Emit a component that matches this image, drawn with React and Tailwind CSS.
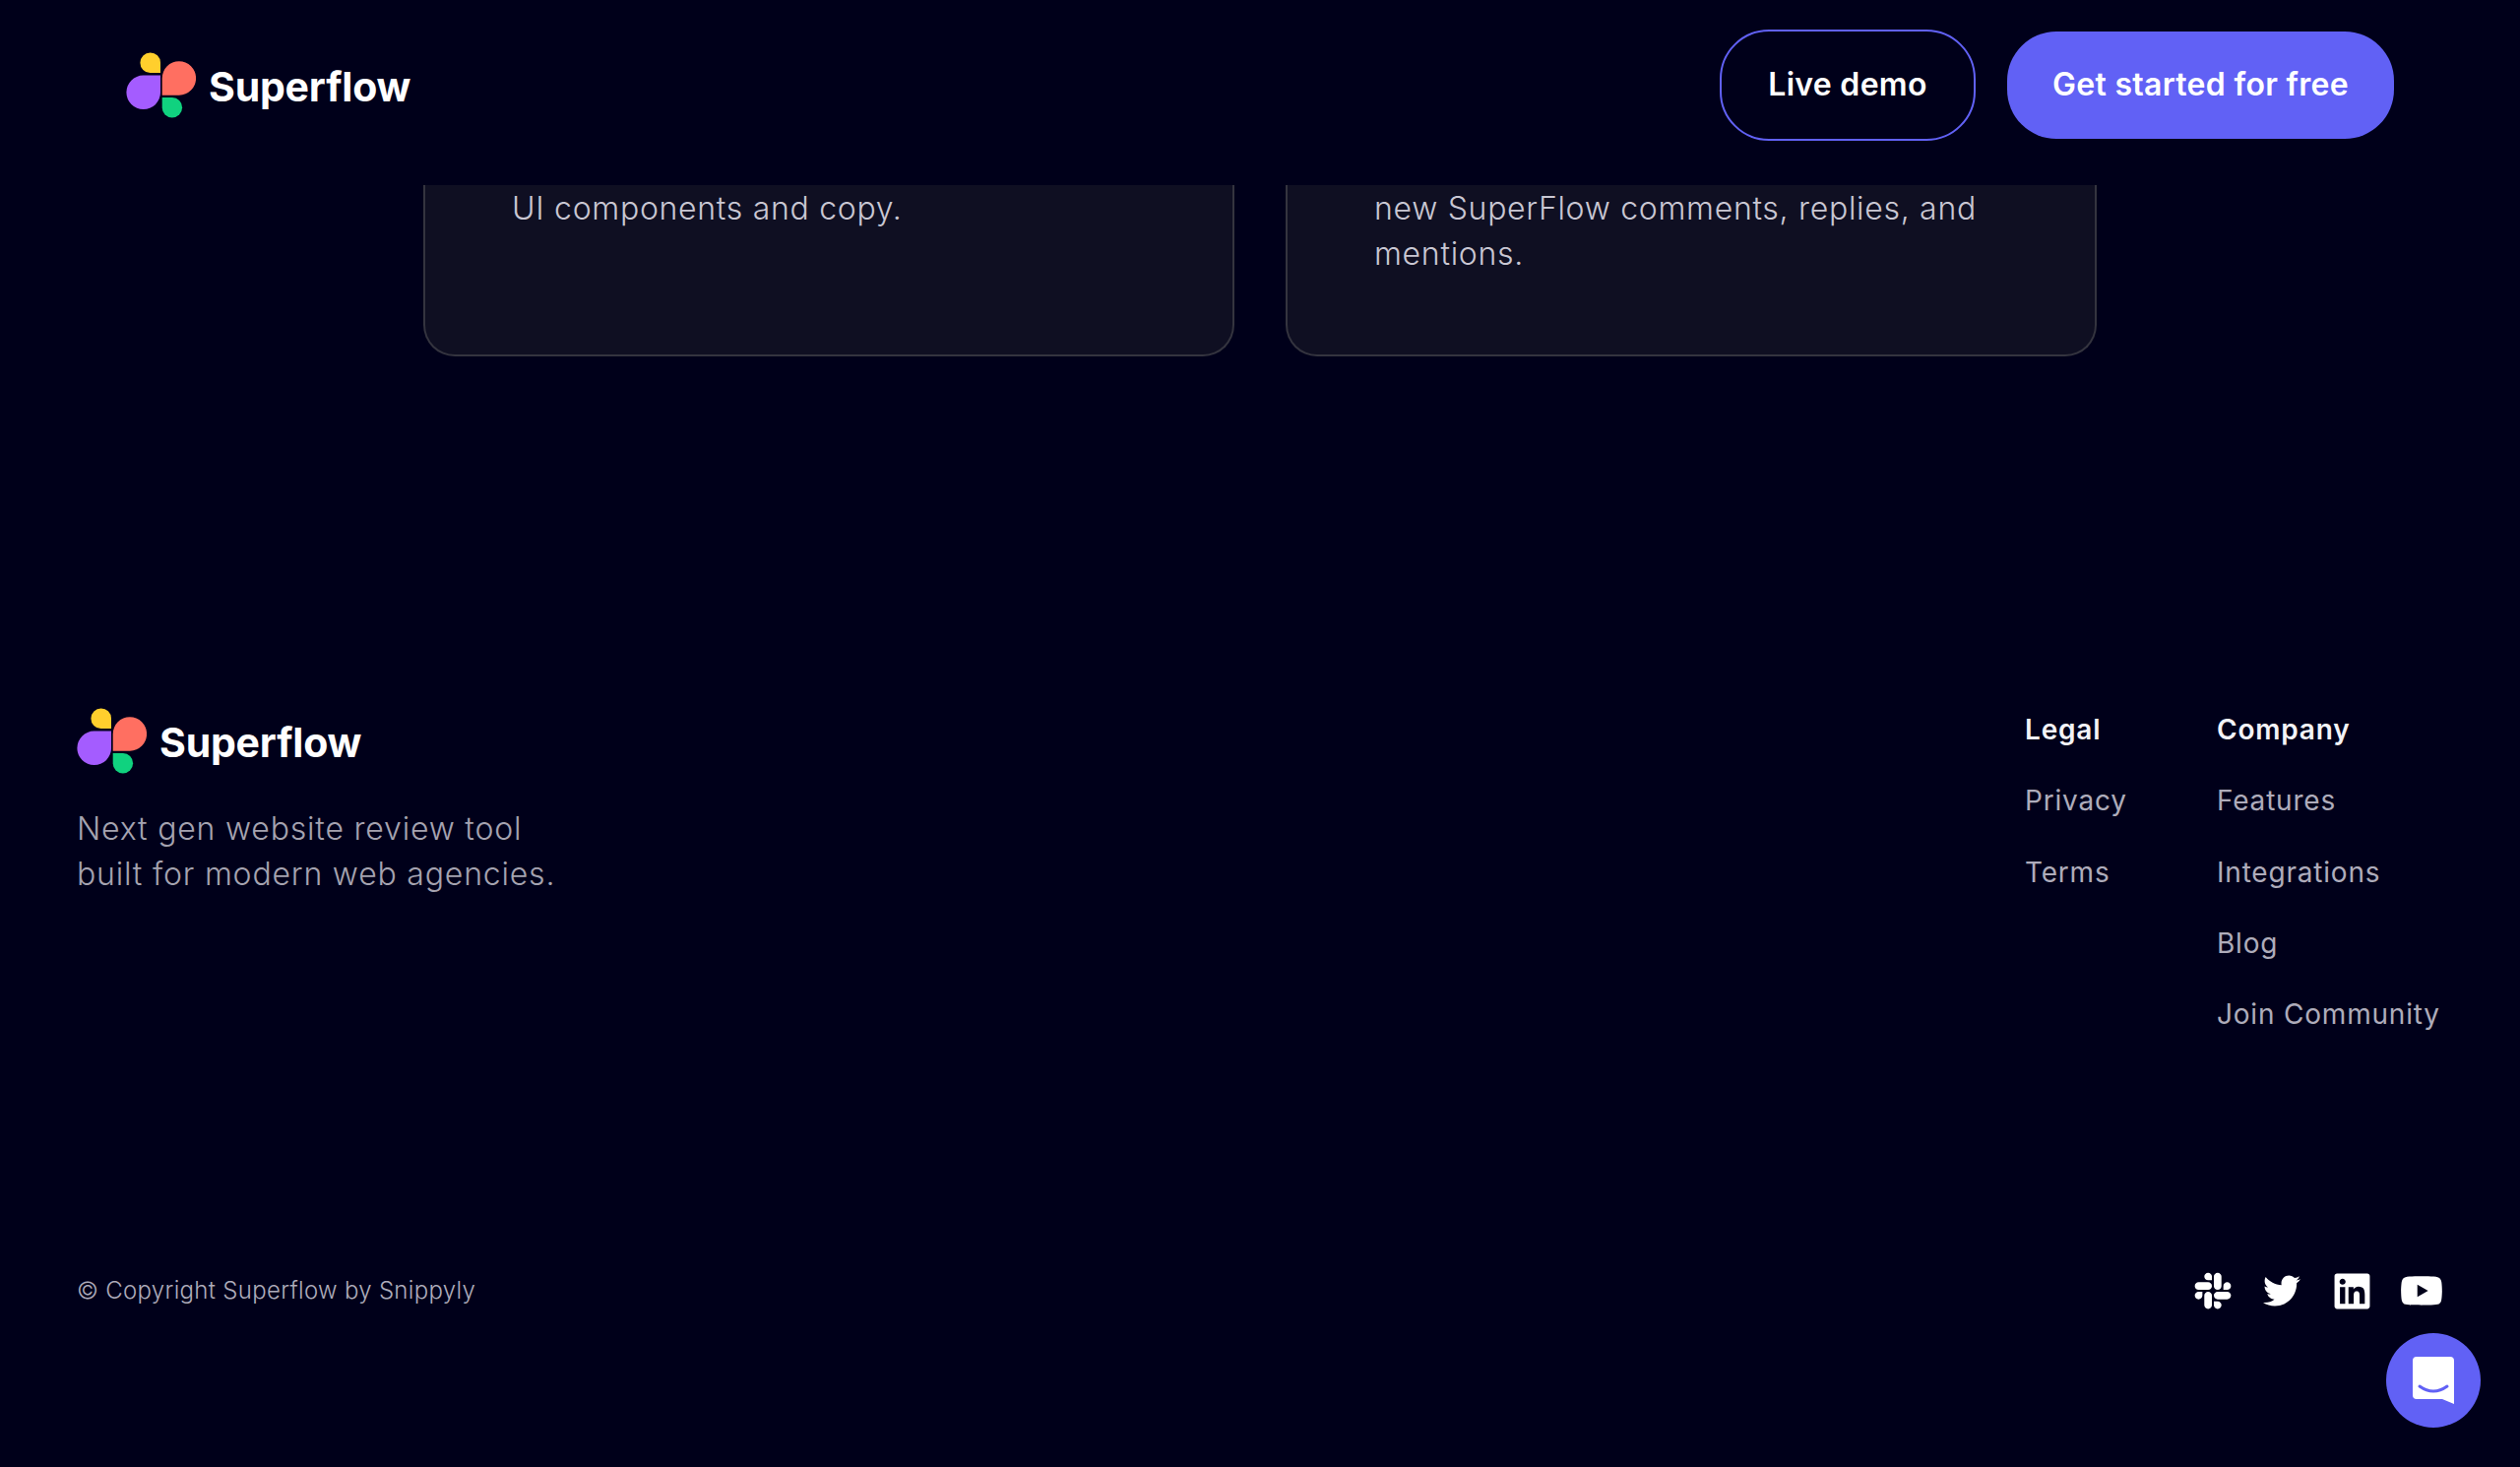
import { FaSlack, FaTwitter, FaLinkedin, FaYoutube } from "react-icons/fa";

const FONT = "font-['Inter','Liberation_Sans',sans-serif]";

function Logo() {
  return (
    <div className="flex items-center gap-[13px]">
      <svg width="71" height="67" viewBox="0 0 71 67" className="shrink-0">
        <path d="M35 21H24.5A10.3 10.3 0 1 1 35 10.5Z" fill="#ffcf2d" />
        <path d="M35 23.5V41A17.3 17.3 0 1 1 17.5 23.5Z" fill="#a45cff" />
        <path d="M36.7 43.7V26.5A17.2 17.2 0 1 1 54 43.7Z" fill="#ff6f61" />
        <path d="M36.7 46H47A10.2 10.2 0 1 1 36.7 56.2Z" fill="#10d27f" />
      </svg>
      <span className="mt-[3px] text-[41px] leading-[48px] font-bold text-white tracking-[-0.2px]">Superflow</span>
    </div>
  );
}

function LinkColumn({ title, links, className }) {
  return (
    <div className={className}>
      <p className="h-[72.25px] text-[28px] leading-[40px] font-semibold tracking-[0.8px] text-[#f3f3f7]">{title}</p>
      {links.map(link => (
        <p key={link} className="h-[72.25px] text-[28px] leading-[40px] tracking-[0.8px] text-[#aeacba]">{link}</p>
      ))}
    </div>
  );
}

export default function App() {
  return (
    <div className={`relative h-[1490px] overflow-hidden bg-[#00001a] ${FONT}`}>
      {/* Header */}
      <header className="flex h-[188px] items-center justify-between px-[128px] pb-[16px]">
        <Logo />
        <div className="flex items-center gap-[32px]">
          <button className="h-[113px] w-[260px] rounded-[50px] border-2 border-[#6161f5] text-[32px] font-semibold tracking-[0.3px] text-white">
            Live demo
          </button>
          <button className="h-[109px] w-[393px] rounded-[50px] bg-[#6161f5] text-[32px] font-semibold tracking-[0.3px] text-white">
            Get started for free
          </button>
        </div>
      </header>

      {/* Cards, cut off by the header */}
      <section className="flex gap-[52px] pl-[430px]">
        <div className="h-[174px] w-[824px] rounded-b-[32px] border-x-2 border-b-2 border-[#34343f] bg-[#0f0f22] pl-[88px] pt-[1px] text-[32px] leading-[46px] font-light tracking-[0.7px] text-[#c9c7d3]">
          <p>UI components and copy.</p>
        </div>
        <div className="h-[174px] w-[824px] rounded-b-[32px] border-x-2 border-b-2 border-[#34343f] bg-[#0f0f22] pl-[88px] pt-[1px] text-[32px] leading-[46px] font-light tracking-[0.7px] text-[#c9c7d3]">
          <p>new SuperFlow comments, replies, and</p>
          <p>mentions.</p>
        </div>
      </section>

      {/* Footer */}
      <footer className="px-[78px] pt-[357px]">
        <div className="flex items-start justify-between">
          <div>
            <Logo />
            <p className="mt-[33px] text-[32px] leading-[46px] font-light tracking-[0.8px] text-[#a5a3b0]">
              Next gen website review tool
              <br />
              built for modern web agencies.
            </p>
          </div>
          <div className="flex pt-[2px]">
            <LinkColumn title="Legal" links={["Privacy", "Terms"]} className="w-[195px]" />
            <LinkColumn title="Company" links={["Features", "Integrations", "Blog", "Join Community"]} className="w-[230px]" />
          </div>
        </div>
        <div className="mt-[207px] flex items-center justify-between">
          <p className="text-[24px] leading-[36px] font-light tracking-[0.3px] text-[#aeacba]">© Copyright Superflow by Snippyly</p>
          <div className="flex items-center text-white">
            <FaSlack className="text-[42px]" />
            <FaTwitter className="ml-[30px] text-[38px]" />
            <FaLinkedin className="ml-[32px] text-[41px]" />
            <FaYoutube className="ml-[28px] text-[44px]" />
          </div>
        </div>
      </footer>

      {/* Chat launcher */}
      <button className="absolute left-[2424px] top-[1354px] flex h-[96px] w-[96px] items-center justify-center rounded-full bg-[#6161f5]">
        <svg width="42" height="48" viewBox="0 0 42 48">
          <path d="M4 0H38A4 4 0 0 1 42 4V48L30 43H4A4 4 0 0 1 0 39V4A4 4 0 0 1 4 0Z" fill="#fff" />
          <path d="M7 30Q21 40 35 30" fill="none" stroke="#6161f5" strokeWidth="3" strokeLinecap="round" />
        </svg>
      </button>
    </div>
  );
}
